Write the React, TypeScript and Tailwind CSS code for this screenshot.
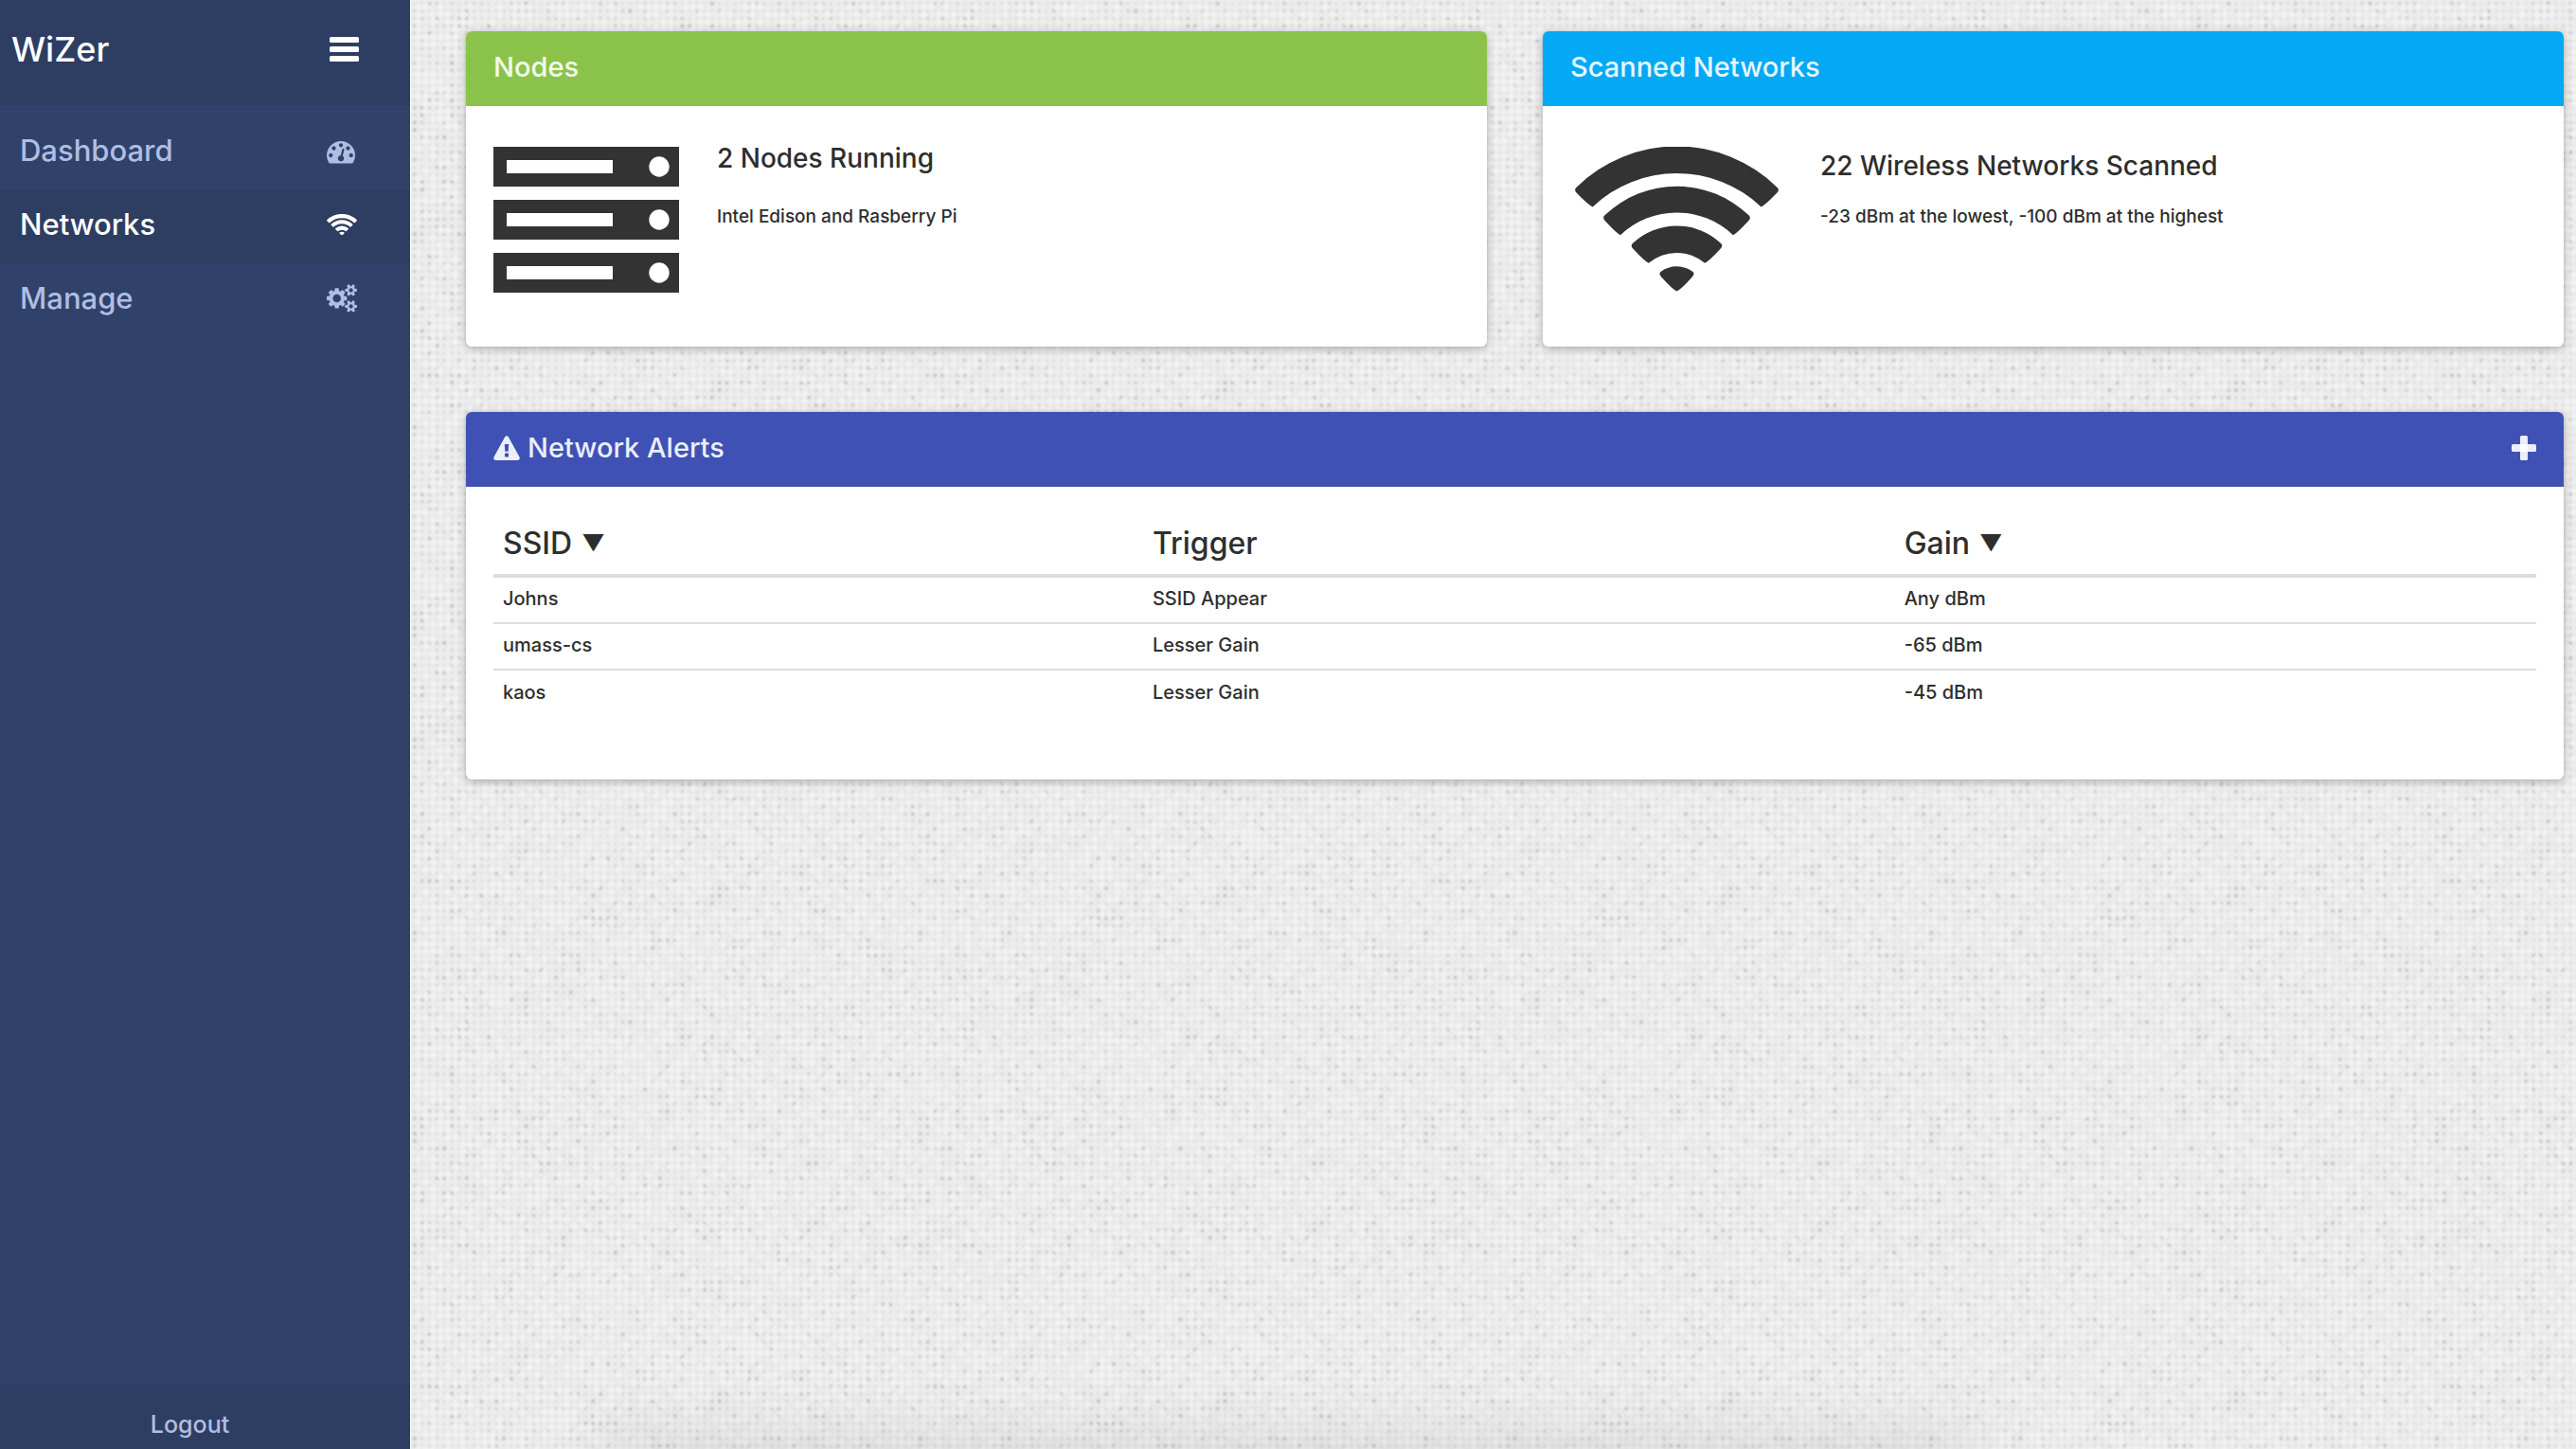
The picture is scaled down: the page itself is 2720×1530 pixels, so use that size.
import React from "react";

type IconProps = { className?: string };

function GaugeIcon({ className }: IconProps) {
  return (
    <svg viewBox="0 256 1792 1408" fill="currentColor" className={className} aria-hidden="true">
      <path d="M384 1152q0-53-37.5-90.5t-90.5-37.5-90.5 37.5-37.5 90.5 37.5 90.5 90.5 37.5 90.5-37.5 37.5-90.5zm192-448q0-53-37.5-90.5t-90.5-37.5-90.5 37.5-37.5 90.5 37.5 90.5 90.5 37.5 90.5-37.5 37.5-90.5zm428 481l101-382q6-26-7.5-48.5t-38.5-29.5-48 6.5-30 39.5l-101 382q-60 5-107 43.5t-63 98.5q-20 77 20 146t117 89 146-20 89-117q16-60-6-117t-72-91zm660-33q0-53-37.5-90.5t-90.5-37.5-90.5 37.5-37.5 90.5 37.5 90.5 90.5 37.5 90.5-37.5 37.5-90.5zm-640-640q0-53-37.5-90.5t-90.5-37.5-90.5 37.5-37.5 90.5 37.5 90.5 90.5 37.5 90.5-37.5 37.5-90.5zm448 192q0-53-37.5-90.5t-90.5-37.5-90.5 37.5-37.5 90.5 37.5 90.5 90.5 37.5 90.5-37.5 37.5-90.5zm320 448q0 261-141 483-19 29-54 29h-1402q-35 0-54-29-141-221-141-483 0-182 71-348t191-286 286-191 348-71 348 71 286 191 191 286 71 348z" />
    </svg>
  );
}

function CogsIcon({ className }: IconProps) {
  return (
    <svg viewBox="-64 0 1920 1792" fill="currentColor" className={className} aria-hidden="true">
      <path d="M832 896q0-106-75-181t-181-75-181 75-75 181 75 181 181 75 181-75 75-181zm768 512q0-52-38-90t-90-38-90 38-38 90q0 53 37.5 90.5t90.5 37.5 90.5-37.5 37.5-90.5zm0-1024q0-52-38-90t-90-38-90 38-38 90q0 53 37.5 90.5t90.5 37.5 90.5-37.5 37.5-90.5zm-384 421v185q0 10-7 19.5t-16 10.5l-155 24q-11 35-32 76 34 48 90 115 7 11 7 20 0 12-7 19-23 30-82.5 89.5t-78.5 59.5q-11 0-21-7l-115-90q-37 19-77 31-11 108-23 155-7 24-30 24h-186q-11 0-20-7.5t-10-17.5l-23-153q-34-10-75-31l-118 89q-7 7-20 7-11 0-21-8-144-133-144-160 0-9 7-19 10-14 41-53t47-61q-23-44-35-82l-152-24q-10-1-17-9.5t-7-19.5v-185q0-10 7-19.5t16-10.5l155-24q11-35 32-76-34-48-90-115-7-11-7-20 0-12 7-20 22-30 82-89t79-59q11 0 21 7l115 90q34-18 77-32 11-108 23-154 7-24 30-24h186q11 0 20 7.5t10 17.5l23 153q34 10 75 31l118-89q8-7 20-7 11 0 21 8 144 133 144 160 0 8-7 19-12 16-42 54t-45 60q23 48 34 82l152 23q10 2 17 10.5t7 19.5zm640 533v140q0 16-149 31-12 27-30 52 51 113 51 138 0 4-4 7-122 71-124 71-8 0-46-47t-52-68q-20 2-30 2t-30-2q-14 21-52 68t-46 47q-2 0-124-71-4-3-4-7 0-25 51-138-18-25-30-52-149-15-149-31v-140q0-16 149-31 13-29 30-52-51-113-51-138 0-4 4-7 4-2 35-20t59-34 30-16q8 0 46 46.5t52 67.5q20-2 30-2t30 2q51-71 92-112l6-2q4 0 124 70 4 3 4 7 0 25-51 138 17 23 30 52 149 15 149 31zm0-1024v140q0 16-149 31-12 27-30 52 51 113 51 138 0 4-4 7-122 71-124 71-8 0-46-47t-52-68q-20 2-30 2t-30-2q-14 21-52 68t-46 47q-2 0-124-71-4-3-4-7 0-25 51-138-18-25-30-52-149-15-149-31v-140q0-16 149-31 13-29 30-52-51-113-51-138 0-4 4-7 4-2 35-20t59-34 30-16q8 0 46 46.5t52 67.5q20-2 30-2t30 2q51-71 92-112l6-2q4 0 124 70 4 3 4 7 0 25-51 138 17 23 30 52 149 15 149 31z" />
    </svg>
  );
}

function WifiIcon({ className }: IconProps) {
  return (
    <svg viewBox="69 47 644 457" fill="currentColor" className={className} aria-hidden="true">
      <path d="M125 237Q112 232 75 194Q64 183 74 175A452 452 0 0 1 708 175Q718 183 707 194Q670 232 658 237A388 388 0 0 0 125 237Z" />
      <path d="M213 326Q200 320 165 282Q154 271 164 263A328 328 0 0 1 618 263Q628 271 617 282Q582 320 569 326A259 259 0 0 0 213 326Z" />
      <path d="M302 415Q289 409 253 370Q243 359 252 352A203 203 0 0 1 530 352Q539 359 529 370Q493 409 480 415A137 137 0 0 0 302 415Z" />
      <path d="M391 504Q377 498 343 460Q332 448 341 442A84 84 0 0 1 441 442Q450 448 439 460Q405 498 391 504Z" />
    </svg>
  );
}

function MenuIcon({ className }: IconProps) {
  return (
    <svg viewBox="0 0 31 26" fill="currentColor" className={className} aria-hidden="true">
      <rect x="0" y="0" width="31" height="6" rx="1.5" />
      <rect x="0" y="10" width="31" height="6" rx="1.5" />
      <rect x="0" y="20" width="31" height="6" rx="1.5" />
    </svg>
  );
}

function WarningIcon({ className }: IconProps) {
  return (
    <svg viewBox="0 0 28 26" fill="currentColor" fillRule="evenodd" className={className} aria-hidden="true">
      <path d="M12.2 1.2Q14 -0.9 15.8 1.2L27.6 22.8Q28.4 25.6 25.8 26H2.2Q-0.4 25.6 0.4 22.8ZM11.8 9L12.3 16.8H15.7L16.2 9ZM12 18.6V22.4H16V18.6Z" />
    </svg>
  );
}

function PlusIcon({ className }: IconProps) {
  return (
    <svg viewBox="0 0 26 26" fill="currentColor" className={className} aria-hidden="true">
      <rect x="9" y="0" width="8" height="26" rx="1.5" />
      <rect x="0" y="9" width="26" height="8" rx="1.5" />
    </svg>
  );
}

function ServerIcon({ className }: IconProps) {
  return (
    <svg viewBox="0 0 196 154" fill="currentColor" className={className} aria-hidden="true">
      {[0, 56, 112].map((y) => (
        <g key={y}>
          <rect x="0" y={y} width="196" height="42" />
          <rect x="14" y={y + 14} width="112" height="14" fill="#fff" />
          <circle cx="175" cy={y + 21} r="10.7" fill="#fff" />
        </g>
      ))}
    </svg>
  );
}

// Woven paper texture: a repeating tile of small dots with varied darkness.
const DOTS = 68;
const PITCH = 7.85;
const TILE = DOTS * PITCH;

function buildDots() {
  let seed = 20177;
  const next = () => {
    seed = (seed * 1103515245 + 12345) % 2147483648;
    return seed / 2147483648;
  };
  const levels: string[] = ["", "", "", "", ""];
  let light = "";
  for (let r = 0; r < DOTS; r++) {
    for (let c = 0; c < DOTS; c++) {
      const x = (c * PITCH + 2).toFixed(2);
      const y = (r * PITCH + 2).toFixed(2);
      const level = Math.min(4, Math.floor(Math.pow(next(), 2.6) * 5));
      levels[level] += `M${x} ${y}h3.6v3.6h-3.6z`;
      if (next() > 0.5) {
        light += `M${(c * PITCH + 5.5).toFixed(2)} ${(r * PITCH + 5.5).toFixed(2)}h4v4h-4z`;
      }
    }
  }
  return { levels, light };
}

const texture = buildDots();
const opacities = [0.06, 0.09, 0.12, 0.15, 0.2];

function Texture() {
  return (
    <svg className="pointer-events-none absolute inset-0 h-full w-full" aria-hidden="true">
      <defs>
        <filter id="soften">
          <feGaussianBlur stdDeviation="0.8" />
        </filter>
        <filter id="haze" x="-20%" y="-200%" width="140%" height="500%">
          <feGaussianBlur stdDeviation="28" />
        </filter>
        <pattern id="weave" width={TILE} height={TILE} patternUnits="userSpaceOnUse">
          <g filter="url(#soften)">
            <path d={texture.light} fill="#fff" fillOpacity="0.4" />
            {texture.levels.map((d, i) => (
              <path key={i} d={d} fill="#000" fillOpacity={opacities[i]} />
            ))}
          </g>
        </pattern>
      </defs>
      <rect width="100%" height="100%" fill="url(#weave)" />
      <rect x="9%" y="99%" width="63%" height="60" fill="#000" fillOpacity="0.08" filter="url(#haze)" />
    </svg>
  );
}

const navItems = [
  { label: "Dashboard", icon: <GaugeIcon className="mt-1 mr-0.5 w-[30px]" />, active: false },
  { label: "Networks", icon: <WifiIcon className="w-8" />, active: true },
  { label: "Manage", icon: <CogsIcon className="w-8" />, active: false },
];

function Sidebar() {
  return (
    <aside className="flex w-[434px] shrink-0 flex-col border-r border-white bg-[#30426a] text-[#b0bee2]">
      <div className="flex h-[111px] items-center justify-between bg-[#2d3e62] pr-[54px] pb-2 pl-3 text-white">
        <h1 className="text-[36px] leading-10 font-medium">WiZer</h1>
        <button type="button" aria-label="Toggle menu">
          <MenuIcon className="w-[31px]" />
        </button>
      </div>
      <nav className="flex flex-col pt-[11px]">
        {navItems.map((item) => (
          <a
            key={item.label}
            href="#"
            aria-current={item.active ? "page" : undefined}
            className={
              "flex h-[78px] items-center justify-between pr-14 pb-1 pl-[21px] text-[31px] leading-10 font-medium " +
              (item.active ? "bg-[#2d3e62] text-white" : "")
            }
          >
            {item.label}
            {item.icon}
          </a>
        ))}
      </nav>
      <a
        href="#"
        className="mt-auto flex h-[68px] items-center justify-center bg-[#2d3e62] pt-4 pr-8 text-[25px] leading-8 font-medium"
      >
        Logout
      </a>
    </aside>
  );
}

type CardProps = {
  title: React.ReactNode;
  color: string;
  action?: React.ReactNode;
  children: React.ReactNode;
};

function Card({ title, color, action, children }: CardProps) {
  return (
    <section className="overflow-hidden rounded-md bg-white text-[#2e2e2e] shadow-[0_2px_8px_rgba(0,0,0,0.3)]">
      <header className={"flex h-[79px] items-center justify-between px-[29px] pb-1 text-white/90 " + color}>
        <h2 className="flex items-center gap-2 text-[29px] leading-10 font-medium">{title}</h2>
        {action}
      </header>
      {children}
    </section>
  );
}

const alerts = [
  ["Johns", "SSID Appear", "Any dBm"],
  ["umass-cs", "Lesser Gain", "-65 dBm"],
  ["kaos", "Lesser Gain", "-45 dBm"],
];

function SortHeader({ label }: { label: string }) {
  return (
    <button type="button" className="flex items-center gap-2.5 font-medium">
      {label}
      <span className="text-2xl">▼</span>
    </button>
  );
}

function AlertsTable() {
  return (
    <table className="w-full table-fixed border-separate border-spacing-0 text-left">
      <thead>
        <tr className="h-16 text-[32px] leading-10 [&>th]:border-b-4 [&>th]:border-[#dddddd] [&>th]:px-2.5 [&>th]:pb-1 [&>th]:font-medium">
          <th className="w-[31.8%]">
            <SortHeader label="SSID" />
          </th>
          <th className="w-[36.8%]">Trigger</th>
          <th>
            <SortHeader label="Gain" />
          </th>
        </tr>
      </thead>
      <tbody className="text-xl font-medium [&>tr:last-child>td]:border-b-0">
        {alerts.map((row) => (
          <tr key={row[0]} className="h-[49px]">
            {row.map((cell) => (
              <td key={cell} className="border-b-2 border-[#dddddd] px-2.5 pb-1">
                {cell}
              </td>
            ))}
          </tr>
        ))}
      </tbody>
    </table>
  );
}

export default function App() {
  return (
    <div className="flex min-h-screen font-['Inter',sans-serif]">
      <Sidebar />
      <main className="relative flex-1 overflow-hidden bg-[#ededed]">
        <Texture />
        <div className="relative flex flex-col gap-[69px] pt-[33px] pr-[13px] pl-[58px]">
          <div className="grid grid-cols-2 gap-[59px]">
            <Card title="Nodes" color="bg-[#8bc34a]">
              <div className="flex min-h-[254px] items-start gap-10 px-[29px] pt-[35px]">
                <ServerIcon className="mt-2 w-[196px] text-[#333333]" />
                <div className="flex flex-col gap-7">
                  <h3 className="text-[28px] leading-10 font-medium">2 Nodes Running</h3>
                  <p className="text-[19px] leading-7 font-medium">Intel Edison and Rasberry Pi</p>
                </div>
              </div>
            </Card>
            <Card title="Scanned Networks" color="bg-[#03a9f4]">
              <div className="flex min-h-[254px] items-start gap-11 px-[34px] pt-[43px]">
                <WifiIcon className="w-[215px] text-[#333333]" />
                <div className="flex flex-col gap-5">
                  <h3 className="text-[28px] leading-10 font-medium">22 Wireless Networks Scanned</h3>
                  <p className="text-[19px] leading-7 font-medium">-23 dBm at the lowest, -100 dBm at the highest</p>
                </div>
              </div>
            </Card>
          </div>
          <Card
            color="bg-[#3f51b5]"
            title={
              <>
                <WarningIcon className="w-7" />
                Network Alerts
              </>
            }
            action={
              <button type="button" aria-label="Add alert">
                <PlusIcon className="w-[26px]" />
              </button>
            }
          >
            <div className="px-[29px] pt-8 pb-[66px]">
              <AlertsTable />
            </div>
          </Card>
        </div>
      </main>
    </div>
  );
}
